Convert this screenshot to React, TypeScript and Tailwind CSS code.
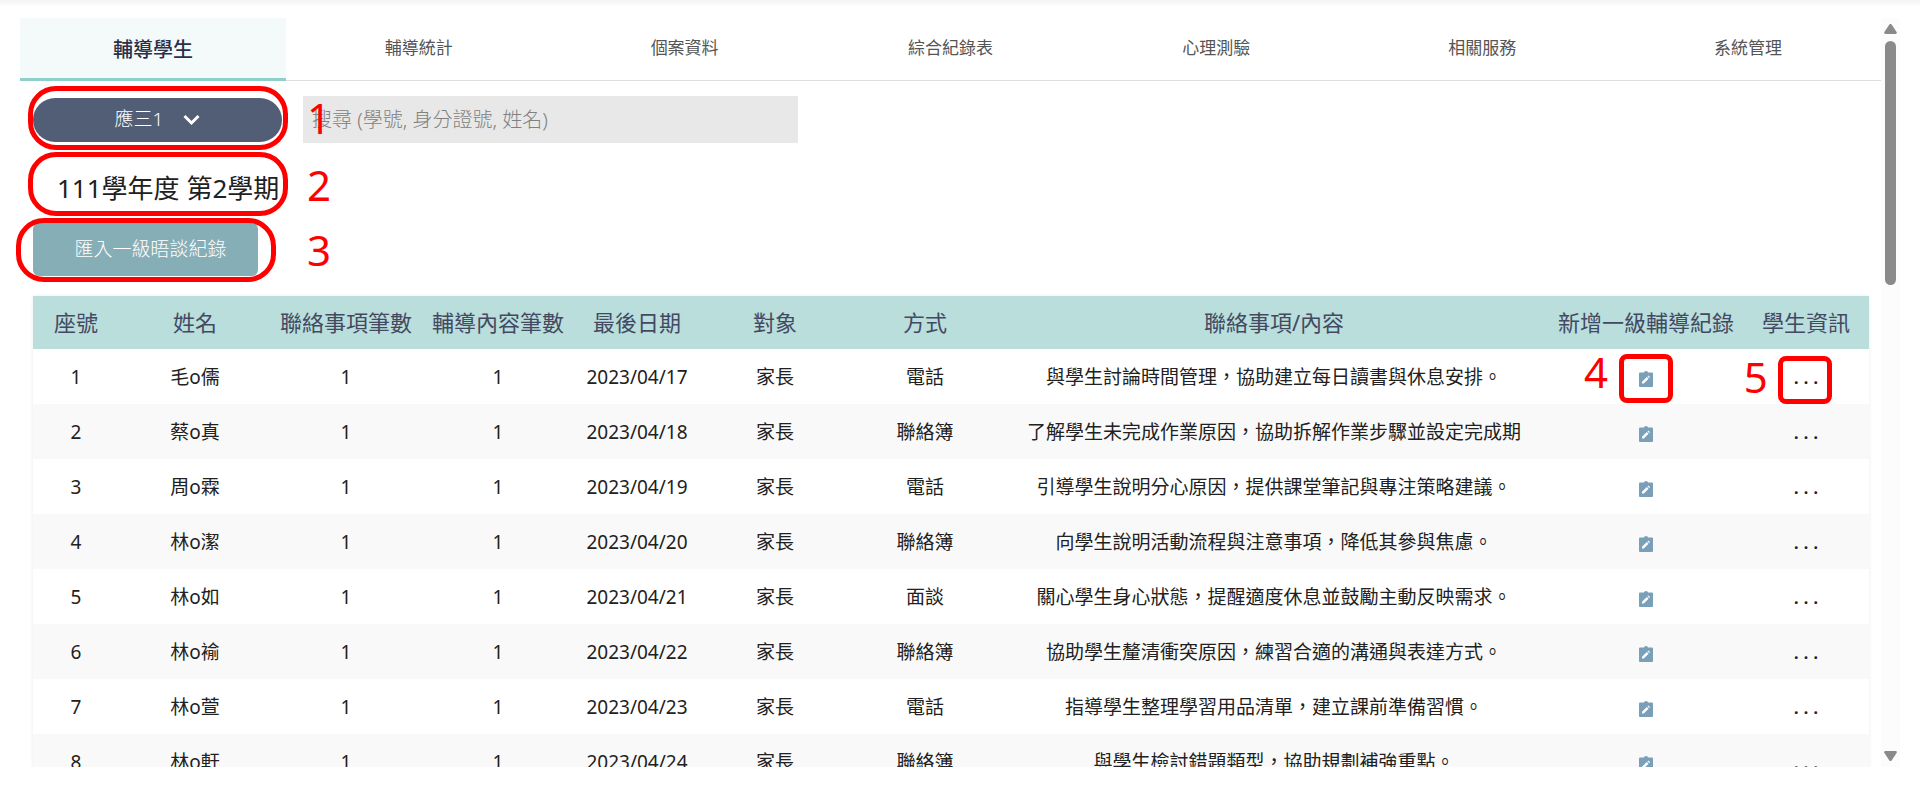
import { useState } from "react";

type RecordRow = {
    name: string;
    date: string;
    method: string;
    content: string;
};

const tabs = [
    "輔導學生",
    "輔導統計",
    "個案資料",
    "綜合紀錄表",
    "心理測驗",
    "相關服務",
    "系統管理",
];

const columns = [
    { label: "座號", width: "w-[86px]" },
    { label: "姓名", width: "w-[152px]" },
    { label: "聯絡事項筆數", width: "w-[150px]" },
    { label: "輔導內容筆數", width: "w-[154px]" },
    { label: "最後日期", width: "w-[124px]" },
    { label: "對象", width: "w-[152px]" },
    { label: "方式", width: "w-[148px]" },
    { label: "聯絡事項/內容", width: "w-[550px]" },
    { label: "新增一級輔導紀錄", width: "w-[194px]" },
    { label: "學生資訊", width: "w-[126px]" },
];

const rows: RecordRow[] = [
    { name: "毛o儒", date: "2023/04/17", method: "電話", content: "與學生討論時間管理，協助建立每日讀書與休息安排。" },
    { name: "蔡o真", date: "2023/04/18", method: "聯絡簿", content: "了解學生未完成作業原因，協助拆解作業步驟並設定完成期" },
    { name: "周o霖", date: "2023/04/19", method: "電話", content: "引導學生說明分心原因，提供課堂筆記與專注策略建議。" },
    { name: "林o潔", date: "2023/04/20", method: "聯絡簿", content: "向學生說明活動流程與注意事項，降低其參與焦慮。" },
    { name: "林o如", date: "2023/04/21", method: "面談", content: "關心學生身心狀態，提醒適度休息並鼓勵主動反映需求。" },
    { name: "林o褕", date: "2023/04/22", method: "聯絡簿", content: "協助學生釐清衝突原因，練習合適的溝通與表達方式。" },
    { name: "林o萱", date: "2023/04/23", method: "電話", content: "指導學生整理學習用品清單，建立課前準備習慣。" },
    { name: "林o軒", date: "2023/04/24", method: "聯絡簿", content: "與學生檢討錯題類型，協助規劃補強重點。" },
];

const classNames = (...values: Array<string | false | undefined>) =>
    values.filter(Boolean).join(" ");

export default function App() {
    const [activeTab, setActiveTab] = useState(0);

    return (
        <div className="flex h-screen flex-col bg-white pb-5 font-['Noto_Sans','Noto_Sans_CJK_TC',sans-serif] text-[#212121]">
            <div className="h-[18px] shrink-0 bg-linear-to-b from-[#f4f4f4] to-white to-40%" />
            <div className="flex min-h-0 flex-1 pr-5">
                <main className="min-w-0 flex-1 overflow-hidden pl-5">
                    <nav className="grid grid-cols-7">
                        {tabs.map((tab, index) => (
                            <button
                                key={tab}
                                type="button"
                                onClick={() => setActiveTab(index)}
                                aria-current={index === activeTab ? "page" : undefined}
                                className={classNames(
                                    "flex h-[63px] items-center justify-center",
                                    index === activeTab
                                        ? "border-b-3 border-[#8ecfc9] bg-[#f4fafa] pt-1 text-xl font-medium text-[#2b3048]"
                                        : "border-b border-[#dedede] pb-0.5 text-[17px] text-[#555]",
                                )}
                            >
                                {tab}
                            </button>
                        ))}
                    </nav>

                    <div className="pr-3 pl-[13px]">
                        <Toolbar />
                        <RecordTable />
                    </div>
                </main>
                <ScrollBar />
            </div>
        </div>
    );
}

const Toolbar = () => (
    <section className="pt-[15px]">
        <div className="flex items-center">
            <div className="relative w-[270px]">
                <button
                    type="button"
                    className="flex h-11 w-[249px] items-center justify-center gap-5 rounded-full bg-[#525d76] text-[19px] font-light text-white"
                >
                    應三1
                    <ChevronDownIcon />
                </button>
                <span className="pointer-events-none absolute -top-3 -left-[5px] h-[64px] w-[260px] rounded-[28px] border-5 border-[#ff0000]" />
                <Marker className="-top-[2px] left-[274px]" value={1} />
            </div>
            <input
                type="text"
                aria-label="搜尋"
                placeholder="搜尋 (學號, 身分證號, 姓名)"
                className="h-[47px] w-[495px] bg-[#e8e8e8] px-[9px] text-xl font-light placeholder:text-[#808080] focus:outline-none"
            />
        </div>

        <div className="relative mt-[10px] flex h-[63px] w-[255px] items-center pl-6">
            <h1 className="pt-2 text-[26px] whitespace-nowrap">111學年度 第2學期</h1>
            <span className="pointer-events-none absolute -top-[1px] -left-[5px] h-[64px] w-[260px] rounded-[28px] border-5 border-[#ff0000]" />
            <Marker className="top-[10px] left-[274px]" value={2} />
        </div>

        <div className="relative mt-[7px]">
            <button
                type="button"
                className="h-[53px] w-[225px] rounded-md bg-[#86aeb7] pl-[10px] text-[19px] font-light text-white"
            >
                匯入一級晤談紀錄
            </button>
            <span className="pointer-events-none absolute -top-[5px] -left-[17px] h-[64px] w-[260px] rounded-[28px] border-5 border-[#ff0000]" />
            <Marker className="top-[5px] left-[274px]" value={3} />
        </div>
    </section>
);

const RecordTable = () => (
    <table className="mt-5 w-full table-fixed text-center text-[19px] shadow-[0_0_4px_rgba(0,0,0,0.08)]">
        <thead>
            <tr className="h-[53px] bg-[#b9dedb] text-[22px] text-[#444963]">
                {columns.map((column) => (
                    <th
                        key={column.label}
                        className={classNames("font-normal whitespace-nowrap", column.width)}
                    >
                        {column.label}
                    </th>
                ))}
            </tr>
        </thead>
        <tbody>
            {rows.map((row, index) => (
                <tr key={row.name} className="h-[55px] bg-white even:bg-[#f9f9f9]">
                    <td className="pt-0.5">{index + 1}</td>
                    <td className="pt-0.5">{row.name}</td>
                    <td className="pt-0.5">1</td>
                    <td className="pt-0.5">1</td>
                    <td className="pt-0.5">{row.date}</td>
                    <td className="pt-0.5">家長</td>
                    <td className="pt-0.5">{row.method}</td>
                    <td className="overflow-hidden pt-0.5 whitespace-nowrap">{row.content}</td>
                    <td>
                        <div className="relative inline-flex align-middle">
                            <button type="button" aria-label="新增一級輔導紀錄" className="pt-0.5">
                                <ClipboardEditIcon />
                            </button>
                            {index === 0 && (
                                <>
                                    <span className="pointer-events-none absolute -top-[15px] -left-5 h-[49px] w-[54px] rounded-lg border-5 border-[#ff0000]" />
                                    <Marker className="-top-[19px] -left-[55px]" value={4} />
                                </>
                            )}
                        </div>
                    </td>
                    <td>
                        <div className="relative inline-flex align-middle">
                            <button type="button" aria-label="學生資訊" className="text-lg font-semibold">
                                . . .
                            </button>
                            {index === 0 && (
                                <>
                                    <span className="pointer-events-none absolute -top-[7px] -left-4 h-12 w-[54px] rounded-lg border-5 border-[#ff0000]" />
                                    <Marker className="-top-2 -left-[50px]" value={5} />
                                </>
                            )}
                        </div>
                    </td>
                </tr>
            ))}
        </tbody>
    </table>
);

const Marker = ({ value, className }: { value: number; className: string }) => (
    <span
        className={classNames(
            "pointer-events-none absolute z-10 text-[42px] leading-[44px] text-[#ff0000]",
            className,
        )}
    >
        {value}
    </span>
);

const ScrollBar = () => (
    <div
        className="flex w-[19px] shrink-0 flex-col items-center bg-[#fcfcfc] py-[6px] text-[#8a8a8a]"
        aria-hidden
    >
        <svg width="13" height="10" viewBox="0 0 13 10" fill="currentColor">
            <path d="M5.2.8a1.6 1.6 0 0 1 2.6 0l4.8 7.3c.5.9 0 1.9-1 1.9H1.4c-1 0-1.5-1-1-1.9z" />
        </svg>
        <span className="mt-[7px] h-[244px] w-[11px] rounded-full bg-[#8a8a8a]" />
        <svg className="mt-auto" width="13" height="10" viewBox="0 0 13 10" fill="currentColor">
            <path d="M5.2 9.2a1.6 1.6 0 0 0 2.6 0l4.8-7.3c.5-.9 0-1.9-1-1.9H1.4c-1 0-1.5 1-1 1.9z" />
        </svg>
    </div>
);

const ChevronDownIcon = () => (
    <svg
        width="17"
        height="12"
        viewBox="0 0 17 12"
        fill="none"
        stroke="currentColor"
        strokeWidth="3"
        aria-hidden
    >
        <path d="m1.5 2 7 7 7-7" />
    </svg>
);

const ClipboardEditIcon = () => (
    <svg width="14" height="16" viewBox="0 0 14 16" aria-hidden>
        <path
            d="M1 1.5h4a2 1.5 0 0 1 4 0h4a1 1 0 0 1 1 1V15a1 1 0 0 1-1 1H1a1 1 0 0 1-1-1V2.500a1 1 0 0 1 1-1z"
            fill="#7a9fb8"
        />
        <path d="M3 12.500v-1.800l4.800-4.800 1.800 1.800-4.800 4.800zM8.400 5.300l.9-.9 1.800 1.800-.9.9z" fill="#fff" />
    </svg>
);
